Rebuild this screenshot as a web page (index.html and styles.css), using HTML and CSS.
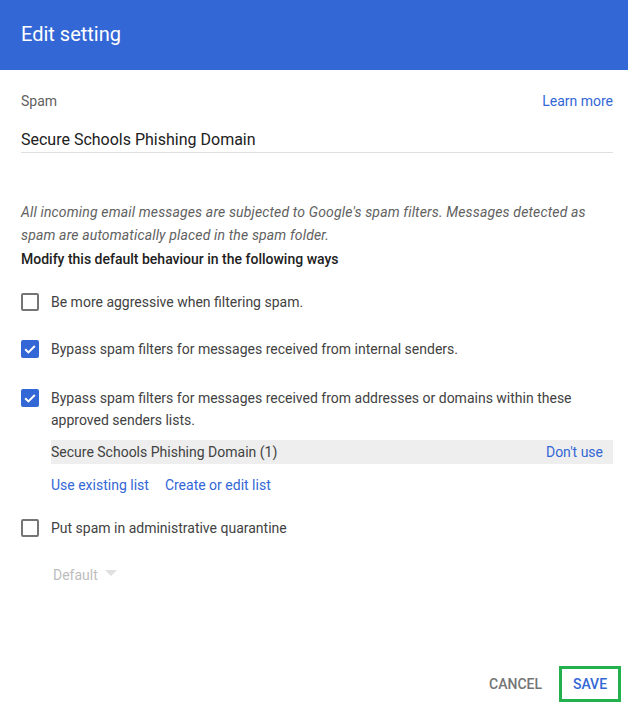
FILE: index.html
```html
<!DOCTYPE html>
<html>
<head>
<meta charset="utf-8">
<link rel="stylesheet" href="styles.css">
</head>
<body>
<div class="dialog">
  <header class="header">Edit setting</header>
  <main class="content">
    <div class="top-row">
      <span class="label">Spam</span>
      <a class="link">Learn more</a>
    </div>
    <div class="name-field">Secure Schools Phishing Domain</div>

    <p class="desc">All incoming email messages are subjected to Google's spam filters. Messages detected as spam are automatically placed in the spam folder.</p>
    <p class="modify">Modify this default behaviour in the following ways</p>

    <div class="option opt1">
      <span class="cb"></span>
      <span class="opt-text">Be more aggressive when filtering spam.</span>
    </div>
    <div class="option opt2">
      <span class="cb checked"><svg viewBox="0 0 18 18" width="18" height="18"><path d="M4.2 9.3 L7.4 12.4 L13.8 6" fill="none" stroke="#fff" stroke-width="2"/></svg></span>
      <span class="opt-text">Bypass spam filters for messages received from internal senders.</span>
    </div>
    <div class="option opt3">
      <span class="cb checked"><svg viewBox="0 0 18 18" width="18" height="18"><path d="M4.2 9.3 L7.4 12.4 L13.8 6" fill="none" stroke="#fff" stroke-width="2"/></svg></span>
      <span class="opt-text">Bypass spam filters for messages received from addresses or domains within these approved senders lists.</span>
    </div>
    <div class="list-bar">
      <span>Secure Schools Phishing Domain (1)</span>
      <a class="link">Don't use</a>
    </div>
    <div class="list-links">
      <a class="link">Use existing list</a>
      <a class="link">Create or edit list</a>
    </div>
    <div class="option opt4">
      <span class="cb"></span>
      <span class="opt-text">Put spam in administrative quarantine</span>
    </div>
    <div class="select">
      <span>Default</span>
      <span class="caret"></span>
    </div>
  </main>
  <footer class="actions">
    <button class="btn cancel">Cancel</button>
    <button class="btn save">Save</button>
  </footer>
</div>
</body>
</html>
```
FILE: styles.css
```css
html, body {
  margin: 0;
  padding: 0;
  background: #fff;
  font-family: Roboto, "Liberation Sans", sans-serif;
  color: #212121;
}
.dialog {
  width: 628px;
  height: 709px;
  display: flex;
  flex-direction: column;
}
.header {
  height: 70px;
  background: #3367d6;
  color: #fff;
  font-size: 20px;
  line-height: 68px;
  padding-left: 21px;
  box-sizing: border-box;
}
.content {
  padding: 0 15px 0 21px;
  flex: 1;
}
.link {
  color: #3367d6;
  font-size: 14px;
  cursor: pointer;
}
.top-row {
  display: flex;
  justify-content: space-between;
  align-items: center;
  height: 18px;
  margin-top: 22px;
}
.label {
  font-size: 14px;
  color: #616161;
}
.name-field {
  margin-top: 20px;
  font-size: 16px;
  line-height: 20px;
  padding-bottom: 2px;
  border-bottom: 1px solid #e0e0e0;
  color: #212121;
}
.desc {
  margin: 48px 0 0 0;
  font-size: 14px;
  font-style: italic;
  line-height: 23px;
  letter-spacing: 0.15px;
  color: #616161;
}
.modify {
  margin: 1px 0 0 0;
  font-size: 14px;
  font-weight: 500;
  line-height: 23px;
  color: #212121;
}
.option {
  display: flex;
  align-items: flex-start;
  gap: 12px;
}
.opt1 { margin-top: 20px; }
.opt2 { margin-top: 25px; }
.opt3 { margin-top: 27px; }
.opt4 { margin-top: 21px; }
.opt-text {
  font-size: 14px;
  line-height: 22px;
  color: #424242;
}
.cb {
  flex: none;
  width: 18px;
  height: 18px;
  box-sizing: border-box;
  border: 2px solid #757575;
  border-radius: 2px;
  margin-top: 2px;
  display: flex;
}
.cb.checked {
  background: #3367d6;
  border: none;
}
.list-bar {
  margin: 9px 0 0 30px;
  height: 24px;
  background: #eeeeee;
  display: flex;
  justify-content: space-between;
  align-items: center;
  padding-right: 10px;
  font-size: 14px;
  color: #424242;
}
.list-links {
  margin: 10px 0 0 30px;
  display: flex;
  gap: 16px;
  line-height: 22px;
}
.select {
  margin: 25px 0 0 32px;
  display: flex;
  align-items: center;
  gap: 7px;
  font-size: 14px;
  color: #bdbdbd;
  line-height: 22px;
}
.caret {
  width: 0;
  height: 0;
  border-left: 6px solid transparent;
  border-right: 6px solid transparent;
  border-top: 6px solid #e0e0e0;
  margin-top: -4px;
}
.actions {
  display: flex;
  justify-content: flex-end;
  align-items: center;
  padding: 0 7px 7px 0;
  gap: 8px;
}
.btn {
  font-family: Roboto, "Liberation Sans", sans-serif;
  background: none;
  border: none;
  text-transform: uppercase;
  font-size: 14px;
  font-weight: 500;
  padding: 0;
  cursor: pointer;
}
.cancel {
  color: #757575;
  padding: 0 9px;
  height: 36px;
}
.save {
  color: #3367d6;
  width: 62px;
  height: 36px;
  border: 3px solid #22b14c;
  box-sizing: border-box;
}
```
